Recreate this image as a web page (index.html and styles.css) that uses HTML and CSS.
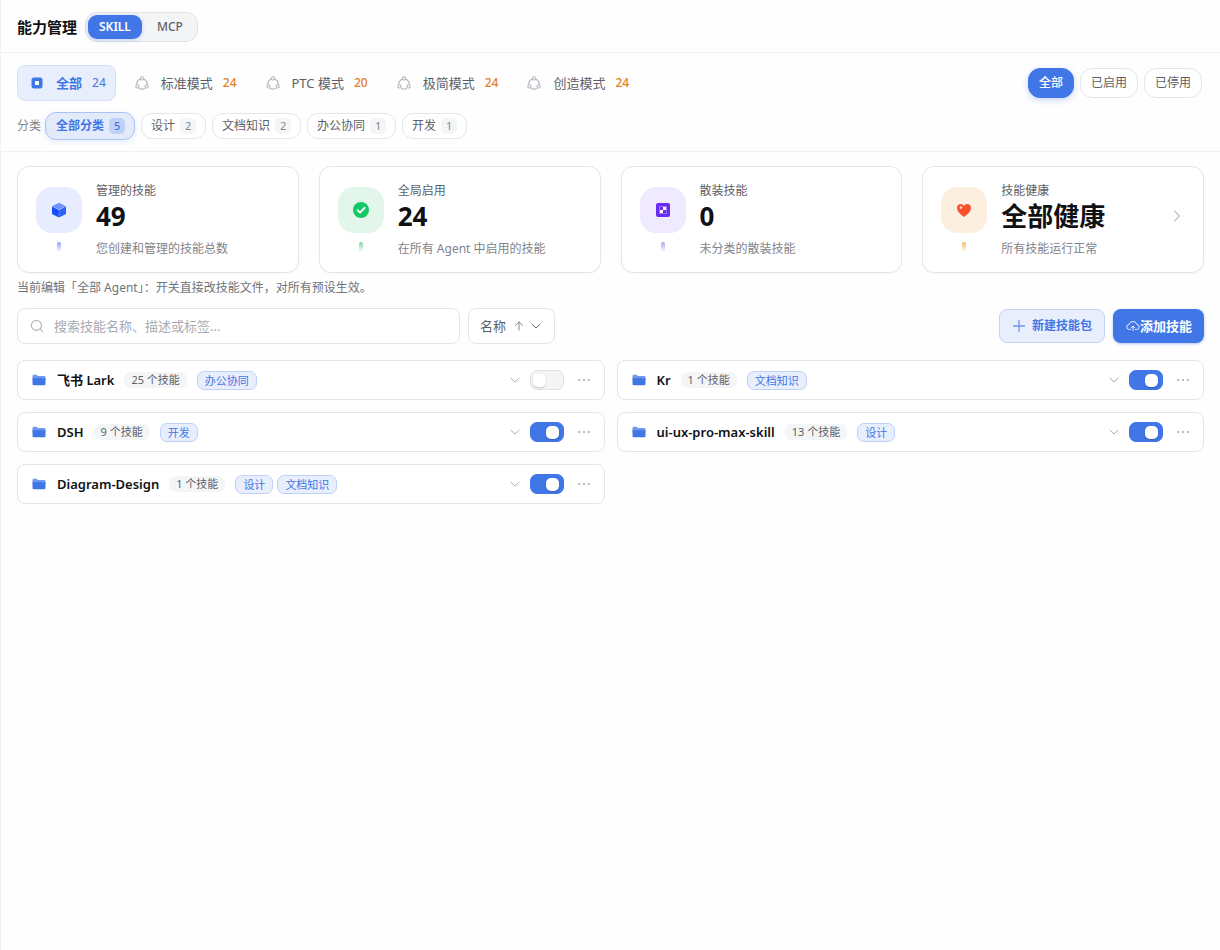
FILE: index.html
```html
<!DOCTYPE html>
<html lang="zh-CN">
<head>
<meta charset="utf-8">
<meta name="viewport" content="width=device-width, initial-scale=1">
<title>能力管理</title>
<link rel="stylesheet" href="styles.css">
</head>
<body>
<svg class="sprite" aria-hidden="true">
  <symbol id="i-ring" viewBox="0 0 14 14"><g fill="none" stroke="currentColor" stroke-width="1.1"><circle cx="7" cy="2.400" r="1.600"/><circle cx="2.400" cy="10.400" r="1.600"/><circle cx="11.600" cy="10.400" r="1.600"/><path d="M4.800 3.200A5.400 5.400 0 0 0 1.700 8.100M9.200 3.200a5.400 5.400 0 0 1 3.100 4.900M4.400 12.400a5.400 5.400 0 0 0 5.200 0" stroke-linecap="round"/></g></symbol>
  <symbol id="i-folder" viewBox="0 0 14 12"><path fill="#6f98ee" d="M.5 2.2C.5 1.2 1 .7 2 .7h2.600l1.500 1.400H12c1 0 1.500.5 1.500 1.500v2H.5z"/><path fill="#4176e6" d="M.5 4.200h13v5.600c0 1-.5 1.500-1.500 1.500H2c-1 0-1.500-.5-1.500-1.500z"/></symbol>
  <symbol id="i-down" viewBox="0 0 12 12"><path d="M2 4.300l4 3.700 4-3.700" fill="none" stroke="currentColor" stroke-linecap="round" stroke-linejoin="round"/></symbol>
  <symbol id="i-more" viewBox="0 0 14 4"><g fill="currentColor"><circle cx="2.200" cy="2" r="1.100"/><circle cx="7" cy="2" r="1.100"/><circle cx="11.800" cy="2" r="1.100"/></g></symbol>
</svg>
<div class="app">
  <header class="header">
    <h1 class="title">能力管理</h1>
    <div class="segment">
      <button class="segment-item is-active" type="button">SKILL</button>
      <button class="segment-item" type="button">MCP</button>
    </div>
  </header>

  <section class="filters">
    <div class="filter-row">
      <nav class="modes">
        <button class="mode is-active" type="button"><svg class="mode-icon" viewBox="0 0 14 14"><rect x="1.500" y="1.500" width="11" height="11" rx="2.500" fill="#4176e6"/><rect x="5" y="5" width="4" height="4" rx=".5" fill="#fff"/></svg><span>全部</span><span class="mode-count">24</span></button>
        <button class="mode" type="button"><svg class="mode-icon"><use href="#i-ring"/></svg><span>标准模式</span><span class="mode-count">24</span></button>
        <button class="mode" type="button"><svg class="mode-icon"><use href="#i-ring"/></svg><span>PTC 模式</span><span class="mode-count">20</span></button>
        <button class="mode" type="button"><svg class="mode-icon"><use href="#i-ring"/></svg><span>极简模式</span><span class="mode-count">24</span></button>
        <button class="mode" type="button"><svg class="mode-icon"><use href="#i-ring"/></svg><span>创造模式</span><span class="mode-count">24</span></button>
      </nav>
      <div class="states">
        <button class="state is-active" type="button">全部</button>
        <button class="state" type="button">已启用</button>
        <button class="state" type="button">已停用</button>
      </div>
    </div>
    <div class="categories">
      <span class="categories-label">分类</span>
      <button class="chip is-active" type="button">全部分类<span class="chip-count">5</span></button>
      <button class="chip" type="button">设计<span class="chip-count">2</span></button>
      <button class="chip" type="button">文档知识<span class="chip-count">2</span></button>
      <button class="chip" type="button">办公协同<span class="chip-count">1</span></button>
      <button class="chip" type="button">开发<span class="chip-count">1</span></button>
    </div>
  </section>

  <main class="main">
    <section class="stats">
      <article class="stat stat-blue">
        <div class="stat-side"><div class="stat-icon"><svg width="16" height="16" viewBox="0 0 16 16"><path d="M8 .8l7 3.400-7 3.400-7-3.400z" fill="#6c93ff"/><path d="M1 4.600l6.900 3.400v7.400L1 12z" fill="#1a4dff"/><path d="M15 4.600L8.100 8v7.400L15 12z" fill="#2f62fb"/></svg></div><i class="stat-bar"></i></div>
        <div class="stat-body"><div class="stat-label">管理的技能</div><div class="stat-value">49</div><div class="stat-desc">您创建和管理的技能总数</div></div>
      </article>
      <article class="stat stat-green">
        <div class="stat-side"><div class="stat-icon"><svg width="16" height="16" viewBox="0 0 16 16"><circle cx="8" cy="8" r="8" fill="#16c765"/><path d="M4.500 8.200L7 10.600l4.600-4.800" fill="none" stroke="#fff" stroke-width="1.800" stroke-linecap="round" stroke-linejoin="round"/></svg></div><i class="stat-bar"></i></div>
        <div class="stat-body"><div class="stat-label">全局启用</div><div class="stat-value">24</div><div class="stat-desc">在所有 Agent 中启用的技能</div></div>
      </article>
      <article class="stat stat-purple">
        <div class="stat-side"><div class="stat-icon"><svg width="16" height="16" viewBox="0 0 16 16"><rect x="1" y="1" width="14" height="14" rx="2" fill="#6a2cf2"/><rect x="4" y="4" width="8" height="8" fill="#9a70f7"/><path d="M5 8h3v3H5zM8 5h3v3H8z" fill="#fff"/><path d="M5 5h3v3H5zM8 8h3v3H8z" fill="#6a2cf2"/></svg></div><i class="stat-bar"></i></div>
        <div class="stat-body"><div class="stat-label">散装技能</div><div class="stat-value">0</div><div class="stat-desc">未分类的散装技能</div></div>
      </article>
      <article class="stat stat-orange">
        <div class="stat-side"><div class="stat-icon"><svg width="16" height="16" viewBox="0 0 16 16"><path d="M8 15C4 12 1 9.300 1 5.800 1 3.600 2.600 2 4.600 2 6 2 7.300 2.700 8 4c.7-1.300 2-2 3.400-2C13.400 2 15 3.600 15 5.800 15 9.300 12 12 8 15z" fill="#f9502b"/><circle cx="5" cy="5.600" r="1.300" fill="#ffd0c4"/></svg></div><i class="stat-bar"></i></div>
        <div class="stat-body"><div class="stat-label">技能健康</div><div class="stat-value">全部健康</div><div class="stat-desc">所有技能运行正常</div></div>
        <svg class="stat-arrow" viewBox="0 0 16 16"><path d="M5.500 3l5 5-5 5" fill="none" stroke="currentColor" stroke-width="1.300" stroke-linecap="round" stroke-linejoin="round"/></svg>
      </article>
    </section>

    <p class="hint">当前编辑「全部 Agent」：开关直接改技能文件，对所有预设生效。</p>

    <div class="toolbar">
      <label class="search">
        <svg width="14" height="14" viewBox="0 0 14 14" aria-hidden="true"><g fill="none" stroke="#b0b4bb" stroke-width="1.100" stroke-linecap="round"><circle cx="6.400" cy="6.400" r="5"/><path d="M10.200 10.200l2.400 2.400"/></g></svg>
        <input class="search-input" type="search" aria-label="搜索技能" placeholder="搜索技能名称、描述或标签...">
      </label>
      <label class="sort">
        <select class="sort-select" aria-label="排序"><option>名称</option></select>
        <svg class="sort-dir" viewBox="0 0 12 12" aria-hidden="true"><path d="M6 10V2M2.500 5.300L6 2l3.500 3.300" fill="none" stroke="currentColor" stroke-linecap="round" stroke-linejoin="round"/></svg>
        <svg class="sort-caret" aria-hidden="true"><use href="#i-down"/></svg>
      </label>
      <div class="actions">
        <button class="btn btn-soft" type="button"><svg width="14" height="14" viewBox="0 0 14 14"><path d="M7 1.500v11M1.500 7h11" stroke="#6f98ee" stroke-width="1.300" stroke-linecap="round"/></svg>新建技能包</button>
        <button class="btn btn-primary" type="button"><svg width="14" height="14" viewBox="0 0 14 14"><g fill="none" stroke="#fff" stroke-width=".9" stroke-linecap="round" stroke-linejoin="round"><path d="M4.500 10.500H3.400a2.500 2.500 0 0 1-.2-5 3.900 3.900 0 0 1 7.600 0 2.500 2.500 0 0 1-.2 5H9.500M7 11.500V7.200M5.200 8.800L7 7.100l1.800 1.700"/></g></svg>添加技能</button>
      </div>
    </div>

    <ul class="packs">
      <li class="pack"><svg class="pack-icon"><use href="#i-folder"/></svg><span class="pack-name">飞书 Lark</span><span class="pack-count">25 个技能</span><span class="tags"><span class="tag">办公协同</span></span>
        <span class="pack-tools"><button class="icon-btn" type="button" aria-label="展开"><svg width="12" height="12"><use href="#i-down"/></svg></button><input class="switch" type="checkbox" aria-label="启用 飞书 Lark"><button class="icon-btn" type="button" aria-label="更多"><svg width="14" height="4"><use href="#i-more"/></svg></button></span></li>
      <li class="pack"><svg class="pack-icon"><use href="#i-folder"/></svg><span class="pack-name">Kr</span><span class="pack-count">1 个技能</span><span class="tags"><span class="tag">文档知识</span></span>
        <span class="pack-tools"><button class="icon-btn" type="button" aria-label="展开"><svg width="12" height="12"><use href="#i-down"/></svg></button><input class="switch" type="checkbox" checked aria-label="启用 Kr"><button class="icon-btn" type="button" aria-label="更多"><svg width="14" height="4"><use href="#i-more"/></svg></button></span></li>
      <li class="pack"><svg class="pack-icon"><use href="#i-folder"/></svg><span class="pack-name">DSH</span><span class="pack-count">9 个技能</span><span class="tags"><span class="tag">开发</span></span>
        <span class="pack-tools"><button class="icon-btn" type="button" aria-label="展开"><svg width="12" height="12"><use href="#i-down"/></svg></button><input class="switch" type="checkbox" checked aria-label="启用 DSH"><button class="icon-btn" type="button" aria-label="更多"><svg width="14" height="4"><use href="#i-more"/></svg></button></span></li>
      <li class="pack"><svg class="pack-icon"><use href="#i-folder"/></svg><span class="pack-name">ui-ux-pro-max-skill</span><span class="pack-count">13 个技能</span><span class="tags"><span class="tag">设计</span></span>
        <span class="pack-tools"><button class="icon-btn" type="button" aria-label="展开"><svg width="12" height="12"><use href="#i-down"/></svg></button><input class="switch" type="checkbox" checked aria-label="启用 ui-ux-pro-max-skill"><button class="icon-btn" type="button" aria-label="更多"><svg width="14" height="4"><use href="#i-more"/></svg></button></span></li>
      <li class="pack"><svg class="pack-icon"><use href="#i-folder"/></svg><span class="pack-name">Diagram-Design</span><span class="pack-count">1 个技能</span><span class="tags"><span class="tag">设计</span><span class="tag">文档知识</span></span>
        <span class="pack-tools"><button class="icon-btn" type="button" aria-label="展开"><svg width="12" height="12"><use href="#i-down"/></svg></button><input class="switch" type="checkbox" checked aria-label="启用 Diagram-Design"><button class="icon-btn" type="button" aria-label="更多"><svg width="14" height="4"><use href="#i-more"/></svg></button></span></li>
    </ul>
  </main>
</div>
</body>
</html>
```
FILE: styles.css
```css
:root {
  --blue: #4176e6;
  --soft: #e8eefc;
  --line: #e4e5e7;
  --text: #0f1115;
  --muted: #5d6167;
  --faint: #7f848b;
}
* { box-sizing: border-box; }
body {
  margin: 0;
  background: #fefefe;
  color: var(--text);
  font: 12px/18px "Noto Sans", "Noto Sans CJK SC", sans-serif;
}
button, input, select { font: inherit; color: inherit; margin: 0; }
button { padding: 0; border: 0; background: none; cursor: pointer; white-space: nowrap; }
svg { flex: none; }
.sprite { position: absolute; width: 0; height: 0; }
.app { min-height: 100vh; border-left: 1px solid #f1f1f2; }

.header {
  display: flex;
  align-items: center;
  gap: 8px;
  padding: 12px 16px 10px;
  border-bottom: 1px solid #f1f1f2;
}
.title { margin: 0; font-size: 15px; line-height: 22px; font-weight: 600; }
.segment {
  display: flex;
  padding: 2px;
  border: 1px solid #dfe1e3;
  border-radius: 12px;
  background: #f4f5f7;
}
.segment-item {
  height: 24px;
  padding: 0 11px;
  border-radius: 9px;
  font-size: 12px;
  font-weight: 500;
  color: var(--muted);
}
.segment-item + .segment-item { padding: 0 12px 0 15px; }
.segment-item.is-active {
  background: var(--blue);
  color: #fff;
  font-weight: 600;
  box-shadow: 0 1px 4px rgba(65, 118, 230, .3);
}

.filters { padding: 12px 16px 11px; border-bottom: 1px solid #f1f1f2; }
.filter-row { display: flex; justify-content: space-between; align-items: center; padding-right: 2px; }
.modes { display: flex; gap: 6px; }
.mode {
  display: flex;
  align-items: center;
  height: 36px;
  padding: 0 9px 0 12px;
  border: 1px solid transparent;
  border-radius: 8px;
  font-size: 13px;
  color: var(--muted);
}
.mode-icon { width: 14px; height: 14px; margin-right: 12px; color: #b0b4bb; }
.mode-count { margin-left: 10px; font-size: 12px; font-weight: 500; color: #dd8026; }
.mode.is-active { background: var(--soft); border-color: #d3dffa; color: var(--blue); font-weight: 600; }
.mode.is-active .mode-count { color: var(--blue); font-weight: 400; }
.states { display: flex; gap: 6px; }
.state {
  height: 30px;
  padding: 0 10px;
  border: 1px solid var(--line);
  border-radius: 12px;
  background: #fff;
  color: var(--muted);
}
.state.is-active {
  background: var(--blue);
  border-color: var(--blue);
  color: #fff;
  font-weight: 500;
  box-shadow: 0 2px 6px rgba(65, 118, 230, .3);
}
.categories { display: flex; align-items: center; gap: 6px; margin-top: 11px; }
.categories-label { margin-right: -2px; color: var(--faint); }
.chip {
  display: flex;
  align-items: center;
  gap: 5px;
  height: 26px;
  padding: 0 9px;
  border: 1px solid var(--line);
  border-radius: 11px;
  background: #fff;
  color: var(--muted);
}
.chip-count {
  min-width: 16px;
  height: 16px;
  border-radius: 5px;
  background: #f4f5f7;
  color: var(--faint);
  font-size: 11px;
  line-height: 16px;
  text-align: center;
}
.chip.is-active {
  height: 28px;
  padding: 0 9px 0 10px;
  border-color: #a9c2f6;
  background: #e3ebfb;
  color: var(--blue);
  font-weight: 600;
  box-shadow: 0 2px 6px rgba(65, 118, 230, .14);
}
.chip.is-active .chip-count { background: #bfd1f7; color: var(--blue); font-weight: 500; }

.main { padding: 14px 16px; }
.stats { display: grid; grid-template-columns: repeat(4, minmax(0, 1fr)); gap: 20px; }
.stat {
  display: flex;
  gap: 14px;
  min-height: 107px;
  padding: 15px 18px 13px;
  border: 1px solid var(--line);
  border-radius: 12px;
  background: #fff;
  box-shadow: 0 1px 2px rgba(0, 0, 0, .03);
}
.stat-side { display: flex; flex-direction: column; align-items: center; gap: 9px; padding-top: 5px; }
.stat-icon { display: grid; place-items: center; width: 46px; height: 46px; border-radius: 16px; }
.stat-bar { width: 4px; height: 10px; border-radius: 2px 2px 0 0; }
.stat-body { flex: 1; min-width: 0; }
.stat-label { color: var(--muted); }
.stat-value { font-size: 26px; line-height: 32px; font-weight: 700; }
.stat-desc { margin-top: 8px; color: var(--faint); }
.stat-arrow { align-self: center; width: 16px; height: 16px; margin-bottom: 10px; color: #c0c4cb; }
.stat-blue .stat-icon { background: #e8ecff; }
.stat-blue .stat-bar { background: linear-gradient(#8f9ff8, #fff); }
.stat-green .stat-icon { background: #e3f6eb; }
.stat-green .stat-bar { background: linear-gradient(#7bd3a0, #fff); }
.stat-purple .stat-icon { background: #efeaff; }
.stat-purple .stat-bar { background: linear-gradient(#b79cf7, #fff); }
.stat-orange .stat-icon { background: #fdefe0; }
.stat-orange .stat-bar { background: linear-gradient(#f6b765, #fff); }

.hint { margin: 6px 0 11px; color: #6f747b; }

.toolbar { display: flex; align-items: center; gap: 8px; }
.search {
  display: flex;
  align-items: center;
  gap: 10px;
  flex: 0 1 443px;
  height: 36px;
  padding: 0 12px;
  border: 1px solid var(--line);
  border-radius: 8px;
  background: #fff;
}
.search-input { flex: 1; min-width: 0; padding: 0; border: 0; outline: 0; background: none; font-size: 13px; }
.search-input::placeholder { color: #a6abb3; opacity: 1; }
.sort { position: relative; color: var(--muted); }
.sort-select {
  appearance: none;
  display: block;
  width: 87px;
  height: 36px;
  padding: 0 11px;
  border: 1px solid var(--line);
  border-radius: 8px;
  background: #fff;
  font-size: 13px;
}
.sort-dir, .sort-caret { position: absolute; top: 12px; width: 12px; height: 12px; pointer-events: none; }
.sort-dir { right: 30px; color: #858a91; }
.sort-caret { right: 13px; }
.actions { display: flex; gap: 8px; margin-left: auto; }
.btn { display: flex; align-items: center; height: 34px; padding: 0 12px; border-radius: 8px; }
.btn-soft { gap: 6px; border: 1px solid #c3d4f8; background: var(--soft); color: var(--blue); font-weight: 600; }
.btn-primary { padding-left: 13px; background: var(--blue); color: #fff; font-size: 13px; font-weight: 600; box-shadow: 0 1px 3px rgba(65, 118, 230, .4); }

.packs {
  display: grid;
  grid-template-columns: repeat(2, minmax(0, 1fr));
  gap: 12px;
  margin: 16px 0 0;
  padding: 0;
  list-style: none;
}
.pack {
  display: flex;
  align-items: center;
  height: 40px;
  padding: 0 13px 0 14px;
  border: 1px solid var(--line);
  border-radius: 8px;
  background: #fff;
}
.pack-icon { width: 14px; height: 12px; margin-right: 11px; }
.pack-name { font-size: 13px; font-weight: 600; white-space: nowrap; }
.pack-count {
  margin-left: 10px;
  padding: 0 7px;
  border-radius: 7px;
  background: #f4f5f7;
  color: var(--muted);
  font-size: 11px;
  line-height: 16px;
  white-space: nowrap;
}
.tags { display: flex; gap: 4px; margin-left: 10px; }
.tag {
  padding: 0 7px;
  border: 1px solid #bfd1f8;
  border-radius: 7px;
  background: var(--soft);
  color: var(--blue);
  font-size: 11px;
  line-height: 17px;
  white-space: nowrap;
}
.pack-tools { display: flex; align-items: center; gap: 9px; margin-left: auto; }
.icon-btn { display: flex; color: #a6abb3; }
.icon-btn:last-child { margin-left: 4px; }
.switch {
  appearance: none;
  display: flex;
  align-items: center;
  width: 34px;
  height: 20px;
  padding: 0 2px;
  border: 1px solid #dfe1e3;
  border-radius: 7px;
  background: #f4f5f7;
}
.switch::before {
  content: "";
  width: 13px;
  height: 13px;
  border-radius: 5px;
  background: #fff;
  box-shadow: 0 1px 2px rgba(0, 0, 0, .2);
}
.switch:checked { justify-content: flex-end; background: var(--blue); border-color: var(--blue); padding-right: 4px; }
```
